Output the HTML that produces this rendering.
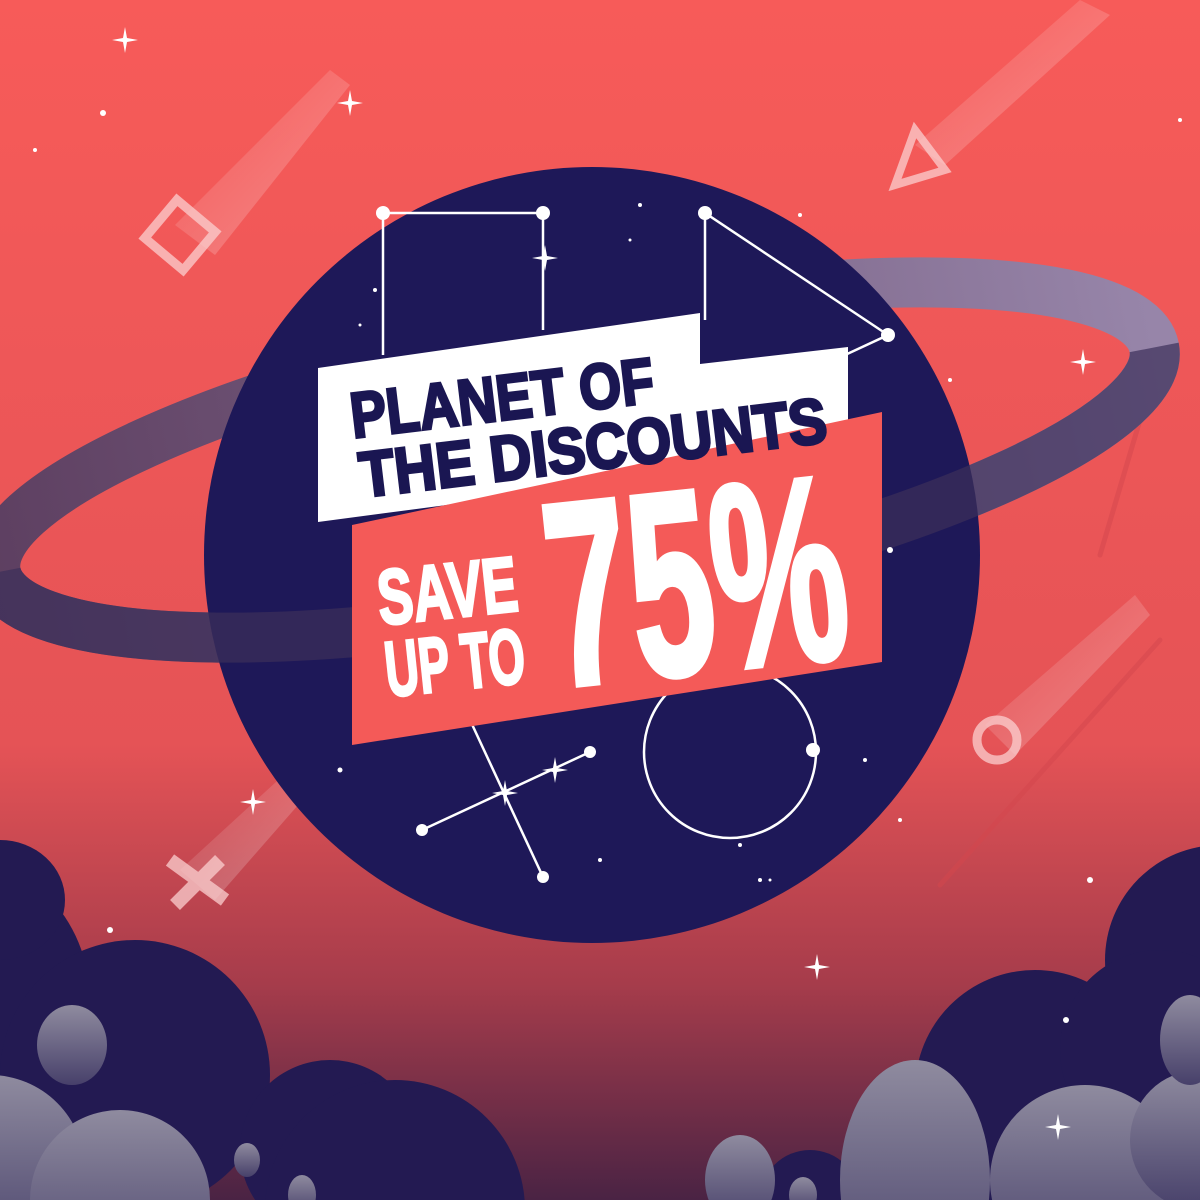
<!DOCTYPE html>
<html><head><meta charset="utf-8"><style>
html,body{margin:0;padding:0;width:1200px;height:1200px;overflow:hidden;background:#f45a58}
svg{display:block}
</style></head><body>
<svg width="1200" height="1200" viewBox="0 0 1200 1200" xmlns="http://www.w3.org/2000/svg">
<defs>
<linearGradient id="bg" x1="0" y1="0" x2="0" y2="1">
<stop offset="0" stop-color="#f75b59"/><stop offset="0.62" stop-color="#e55356"/><stop offset="0.82" stop-color="#a63c4b"/><stop offset="1" stop-color="#4a2344"/>
</linearGradient>
<linearGradient id="ring" x1="0" y1="0" x2="1" y2="0">
<stop offset="0" stop-color="#4e3d62"/><stop offset="0.5" stop-color="#6a5f86"/><stop offset="1" stop-color="#8d8ab2"/>
</linearGradient>
<linearGradient id="gray" x1="0" y1="0" x2="0" y2="1">
<stop offset="0" stop-color="#8f8b9f"/><stop offset="1" stop-color="#47406a"/>
</linearGradient>
<linearGradient id="met" x1="0" y1="0" x2="1" y2="1">
<stop offset="0" stop-color="#fff" stop-opacity="0"/><stop offset="1" stop-color="#fff" stop-opacity="0.3"/>
</linearGradient>
<clipPath id="front"><rect x="-200" y="460" width="1600" height="600" transform="rotate(-11 575 460)"/></clipPath>
<g id="spark"><path d="M0 -13 L2 -2 L13 0 L2 2 L0 13 L-2 2 L-13 0 L-2 -2Z" fill="#fff"/></g>
</defs>
<rect width="1200" height="1200" fill="url(#bg)"/>
<g stroke="#d4474e" stroke-width="5" stroke-linecap="round" opacity="0.5">
<line x1="1140" y1="420" x2="1100" y2="555"/><line x1="1160" y1="640" x2="940" y2="885"/>
</g>
<g>
<polygon points="330,70 350,85 215,255 175,225" fill="url(#met)"/>
<rect x="155" y="210" width="50" height="50" fill="none" stroke="#fbcfcf" stroke-width="9" transform="rotate(40 180 235)" opacity="0.75"/>
<polygon points="1080,0 1110,15 945,165 915,145" fill="url(#met)"/>
<polygon points="895,185 915,130 945,170" fill="none" stroke="#fbcfcf" stroke-width="8" opacity="0.75"/>
<polygon points="1135,595 1150,615 1015,755 985,725" fill="url(#met)"/>
<circle cx="997" cy="740" r="20" fill="none" stroke="#fbcfcf" stroke-width="9" opacity="0.75"/>
<polygon points="300,760 320,780 215,900 180,870" fill="url(#met)"/>
<path d="M170 860 L225 900 M175 905 L220 860" stroke="#fbcfcf" stroke-width="14" opacity="0.75"/>
</g>
<ellipse cx="575" cy="460" rx="590" ry="140" transform="rotate(-11 575 460)" fill="none" stroke="url(#ring)" stroke-width="50" opacity="0.9"/>
<circle cx="592" cy="555" r="388" fill="#1e1858"/>
<g clip-path="url(#front)">
<ellipse cx="575" cy="460" rx="590" ry="140" transform="rotate(-11 575 460)" fill="none" stroke="#3c2f5a" stroke-width="50" opacity="0.7"/>
</g>
<g stroke="#fff" stroke-width="2.5" fill="none">
<path d="M383 355 L383 213 L543 213 L543 330"/>
<path d="M705 320 L705 213 L888 335 L845 355"/>
<circle cx="730" cy="752" r="86"/>
<path d="M422 830 L590 752 M470 720 L543 877"/>
</g>
<g fill="#fff">
<circle cx="383" cy="213" r="7"/><circle cx="543" cy="213" r="7"/><circle cx="705" cy="213" r="7"/><circle cx="888" cy="335" r="7"/>
<circle cx="813" cy="750" r="7"/><circle cx="422" cy="830" r="6"/><circle cx="590" cy="752" r="6"/><circle cx="543" cy="877" r="6"/>
<use href="#spark" x="545" y="258"/><use href="#spark" x="505" y="793"/><use href="#spark" x="555" y="770"/>
<circle cx="640" cy="205" r="2"/><circle cx="630" cy="240" r="1.5"/><circle cx="890" cy="550" r="3"/><circle cx="340" cy="770" r="2.5"/><circle cx="865" cy="760" r="2"/><circle cx="740" cy="845" r="2"/><circle cx="760" cy="880" r="2"/><circle cx="900" cy="820" r="2"/><circle cx="600" cy="860" r="2"/><circle cx="950" cy="380" r="2"/><circle cx="375" cy="290" r="2"/><circle cx="360" cy="325" r="1.5"/><circle cx="800" cy="215" r="2"/><circle cx="770" cy="880" r="1.5"/>
<circle cx="103" cy="113" r="3"/><circle cx="1090" cy="880" r="3"/><circle cx="110" cy="930" r="3"/><circle cx="35" cy="150" r="2"/><circle cx="1180" cy="120" r="2"/>
<use href="#spark" x="125" y="40"/><use href="#spark" x="350" y="103"/><use href="#spark" x="1083" y="362"/><use href="#spark" x="253" y="802"/><use href="#spark" x="817" y="967"/>
</g>
<polygon points="318,368 700,313 700,364 848,347 848,452 318,522" fill="#fff"/>
<polygon points="352,525 882,412 882,662 352,745" fill="#f45a58"/>
<g transform="rotate(-6.8 318 430)" fill="#1a1652" stroke="#1a1652" stroke-width="3" font-family="Liberation Sans, sans-serif" font-weight="bold" font-size="64">
<text x="352" y="442" textLength="305" lengthAdjust="spacingAndGlyphs">PLANET OF</text>
<text x="354" y="502" textLength="470" lengthAdjust="spacingAndGlyphs">THE DISCOUNTS</text>
</g>
<g transform="rotate(-6 380 620)" fill="#fff" stroke="#fff" font-family="Liberation Sans, sans-serif" font-weight="bold">
<text x="380" y="625" font-size="78" stroke-width="3" textLength="140" lengthAdjust="spacingAndGlyphs">SAVE</text>
<text x="380" y="697" font-size="78" stroke-width="3" textLength="140" lengthAdjust="spacingAndGlyphs">UP TO</text>
<text x="548" y="705" font-size="262" stroke-width="6" textLength="300" lengthAdjust="spacingAndGlyphs">75%</text>
</g>
<g fill="#231a52">
<circle cx="-60" cy="1000" r="150"/>
<circle cx="135" cy="1075" r="135"/>
<ellipse cx="0" cy="900" rx="65" ry="60"/>
<circle cx="330" cy="1150" r="90"/>
<circle cx="395" cy="1210" r="130"/>
<circle cx="810" cy="1200" r="50"/>
</g>
<g fill="url(#gray)">
<ellipse cx="72" cy="1045" rx="35" ry="40"/>
<circle cx="-10" cy="1170" r="95"/>
<circle cx="120" cy="1200" r="90"/>
<ellipse cx="247" cy="1160" rx="13" ry="17"/>
<ellipse cx="302" cy="1195" rx="14" ry="20"/>
<ellipse cx="740" cy="1180" rx="35" ry="45"/>
<ellipse cx="803" cy="1195" rx="14" ry="18"/>
</g>
<g fill="#231a52">
<circle cx="1220" cy="960" r="115"/>
<circle cx="1035" cy="1090" r="120"/>
<circle cx="1160" cy="1050" r="100"/>
</g>
<g fill="url(#gray)">
<ellipse cx="915" cy="1180" rx="75" ry="120"/>
<circle cx="1085" cy="1180" r="95"/>
<circle cx="1200" cy="1140" r="70"/>
<ellipse cx="1190" cy="1040" rx="30" ry="45"/>
</g>
<g fill="#fff"><use href="#spark" x="1058" y="1127"/><circle cx="1066" cy="1020" r="3"/></g>
</svg>
</body></html>
